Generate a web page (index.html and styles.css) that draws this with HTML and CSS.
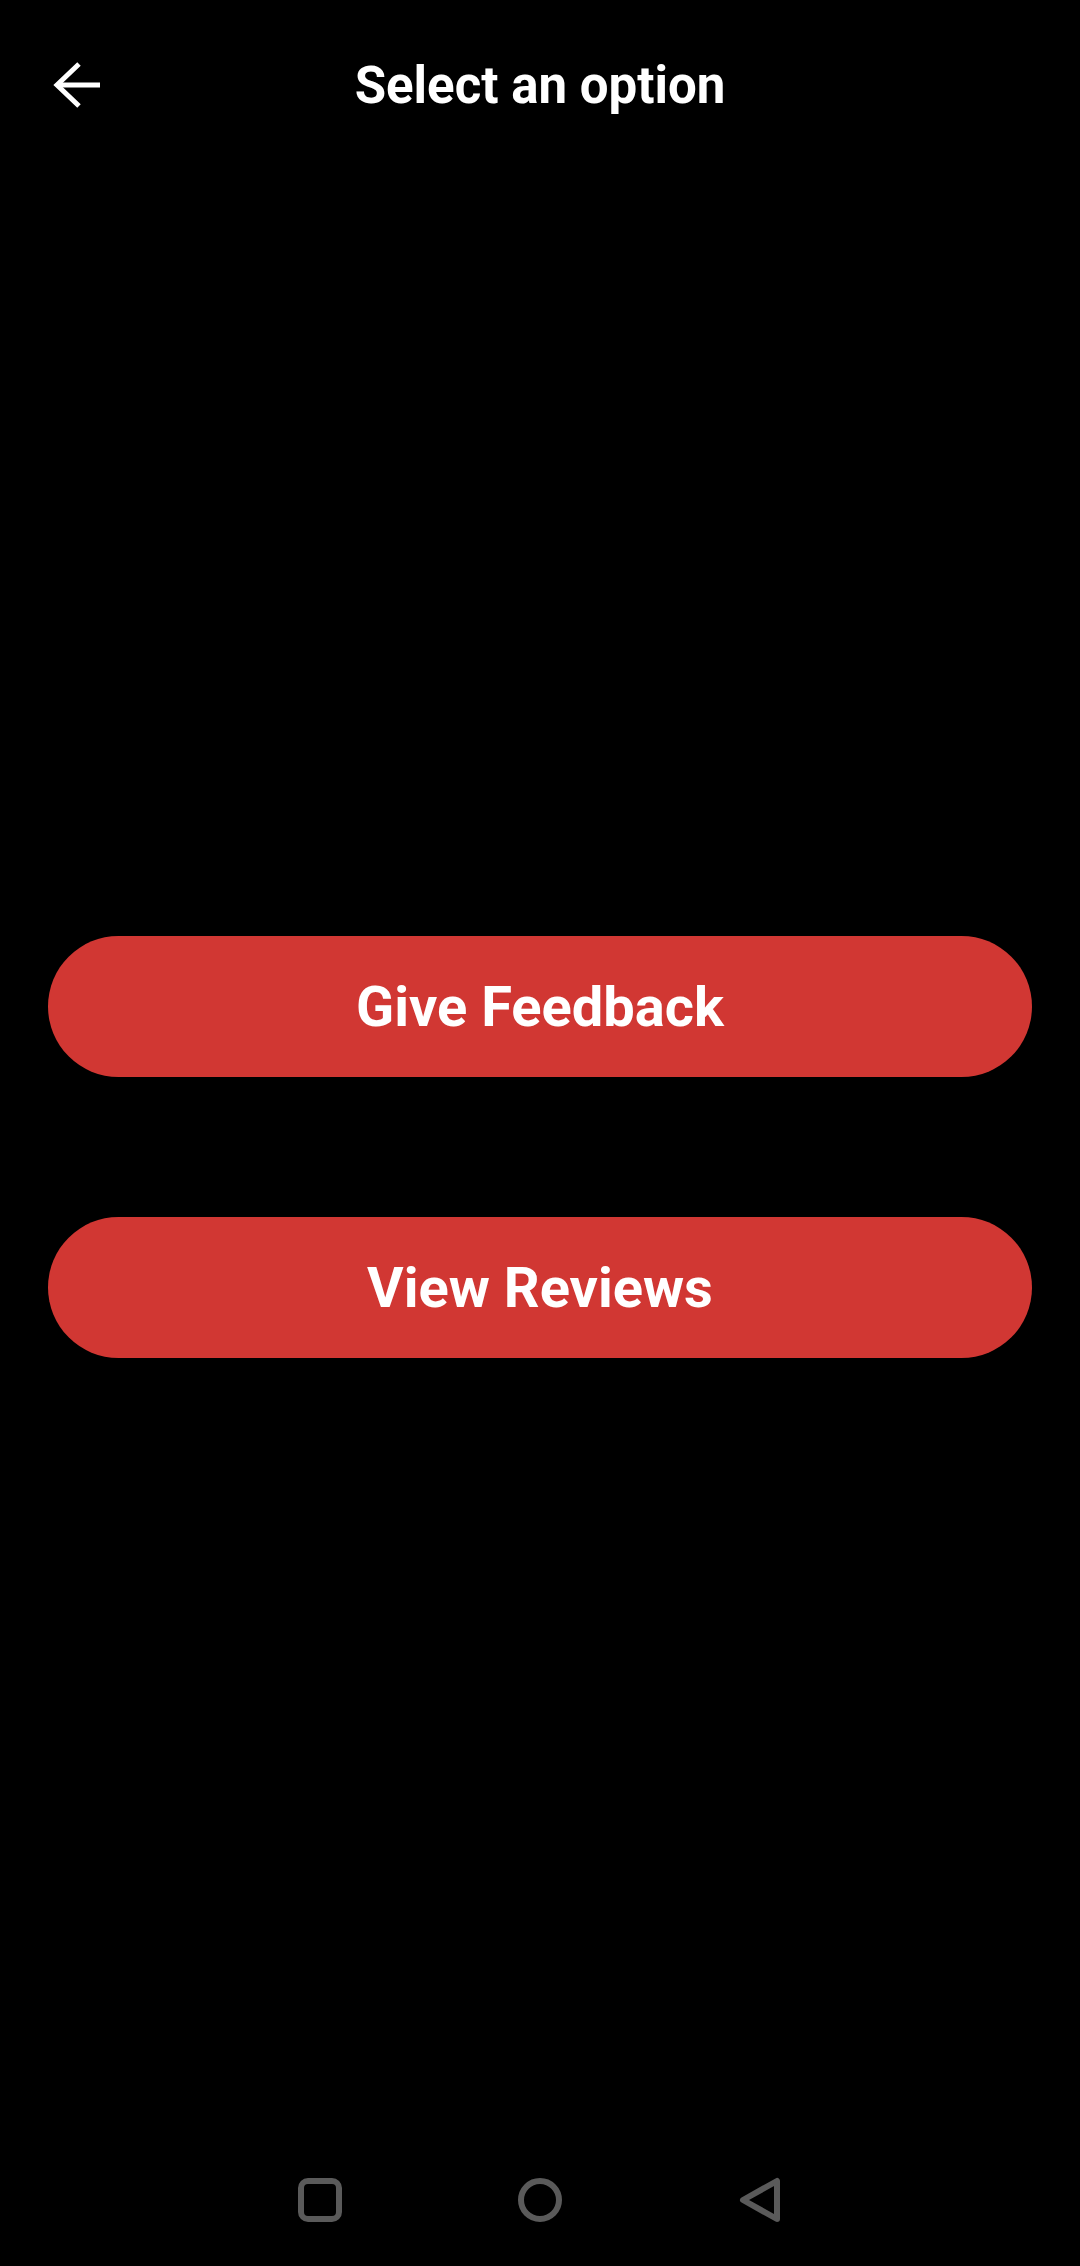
FILE: index.html
```html
<!DOCTYPE html>
<html lang="en">
<head>
<meta charset="utf-8">
<title>Select an option</title>
<link rel="stylesheet" href="styles.css">
</head>
<body>
<div class="screen">
  <header class="topbar">
    <div class="back">
      <svg width="56" height="56" viewBox="0 0 56 56" fill="none" stroke="#fff" stroke-width="5" stroke-linecap="butt" stroke-linejoin="miter">
        <path d="M9 28H51"/>
        <path d="M30 7L8 28L30 49"/>
      </svg>
    </div>
    <h1 class="title">Select an option</h1>
    <div></div>
  </header>
  <main class="options">
    <button class="option">Give Feedback</button>
    <button class="option">View Reviews</button>
  </main>
  <nav class="navbar">
    <div class="nav-item">
      <svg width="60" height="60" viewBox="0 0 60 60" fill="none" stroke="#5a5a5a" stroke-width="6">
        <rect x="11" y="11" width="38" height="38" rx="7"/>
      </svg>
    </div>
    <div class="nav-item">
      <svg width="60" height="60" viewBox="0 0 60 60" fill="none" stroke="#5a5a5a" stroke-width="6">
        <circle cx="30" cy="30" r="19"/>
      </svg>
    </div>
    <div class="nav-item">
      <svg width="60" height="60" viewBox="0 0 60 60" fill="none" stroke="#5a5a5a" stroke-width="6" stroke-linejoin="round" stroke-linecap="round">
        <path d="M47 11V49L13 30Z"/>
      </svg>
    </div>
  </nav>
</div>
</body>
</html>
```
FILE: styles.css
```css
* { box-sizing: border-box; }
html, body {
  margin: 0;
  padding: 0;
  background: #000;
}
body {
  font-family: Roboto, "Noto Sans", "Liberation Sans", sans-serif;
  color: #fff;
}
.screen {
  width: 1080px;
  height: 2266px;
  display: flex;
  flex-direction: column;
}
.topbar {
  height: 170px;
  display: grid;
  grid-template-columns: 1fr auto 1fr;
  align-items: center;
}
.back {
  padding-left: 49px;
  display: flex;
  align-items: center;
}
.back svg { display: block; }
.title {
  margin: 0;
  font-size: 51px;
  font-weight: 700;
  line-height: 1;
  color: #fff;
}
.options {
  flex: 1;
  display: flex;
  flex-direction: column;
  gap: 140px;
  padding: 766px 48px 0;
}
.option {
  height: 141px;
  width: 100%;
  border: none;
  border-radius: 71px;
  background: #d13733;
  color: #fff;
  font-family: Roboto, "Noto Sans", "Liberation Sans", sans-serif;
  font-size: 56px;
  font-weight: 700;
  padding: 0;
}
.navbar {
  height: 132px;
  display: flex;
  justify-content: center;
  align-items: center;
  gap: 160px;
}
.nav-item { width: 60px; height: 60px; }
.nav-item svg { display: block; }
```
